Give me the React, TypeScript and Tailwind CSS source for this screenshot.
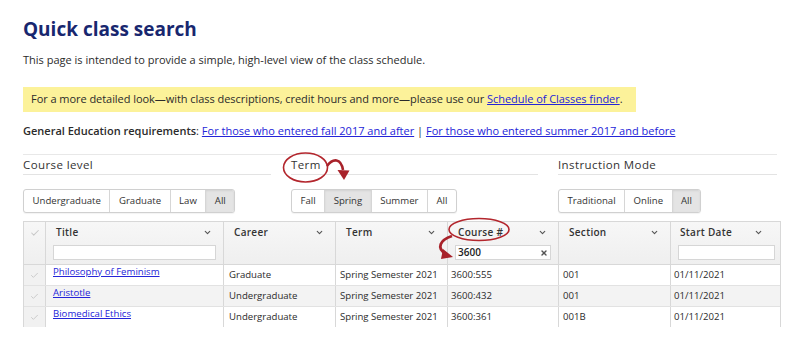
import { ChevronDown, Check, X } from "lucide-react";

const levels = ["Undergraduate", "Graduate", "Law", "All"];
const terms = ["Fall", "Spring", "Summer", "All"];
const modes = ["Traditional", "Online", "All"];

const rows = [
  { title: "Philosophy of Feminism", career: "Graduate", term: "Spring Semester 2021", course: "3600:555", section: "001", start: "01/11/2021" },
  { title: "Aristotle", career: "Undergraduate", term: "Spring Semester 2021", course: "3600:432", section: "001", start: "01/11/2021" },
  { title: "Biomedical Ethics", career: "Undergraduate", term: "Spring Semester 2021", course: "3600:361", section: "001B", start: "01/11/2021" },
];

const cols = "grid grid-cols-[21px_178px_112px_112px_111px_112px_112px]";

function ButtonGroup({ items, active }: { items: string[]; active: string }) {
  return (
    <div className="flex w-fit overflow-hidden rounded-[3px] border border-[#d0d0d0] bg-white shadow-[0_1px_1px_rgba(0,0,0,0.05)]">
      {items.map((it, i) => (
        <div
          key={i}
          className={
            "flex h-[22px] items-center px-[8.5px] text-[9.6px] text-[#333] " +
            (i > 0 ? "border-l border-[#d6d6d6] " : "") +
            (it === active ? "bg-[#e4e4e4] shadow-[inset_0_1px_2px_rgba(0,0,0,0.08)]" : "")
          }
        >
          {it}
        </div>
      ))}
    </div>
  );
}

function Head({ label, filter, value }: { label: string; filter?: boolean; value?: string }) {
  return (
    <div className="relative border-l border-[#d8d8d8] px-[7px] pt-[3px]">
      <div className="flex items-center justify-between pl-[3px] pr-[4px]">
        <span className="text-[10px] font-semibold tracking-[0.3px] text-[#333]">{label}</span>
        <ChevronDown className="h-[9px] w-[9px] text-[#555]" strokeWidth={3} />
      </div>
      {filter && (
        <div className="mt-[5px] flex h-[15px] items-center justify-between border border-[#d6d6d6] bg-white px-[2px]">
          <span className="text-[10px] font-semibold text-[#222]">{value}</span>
          {value && <X className="h-[8px] w-[8px] text-[#555]" strokeWidth={4} />}
        </div>
      )}
    </div>
  );
}

export default function App() {
  return (
    <div className="relative h-[342px] w-[800px] overflow-hidden bg-white px-[23px] pt-[14px] font-['Open_Sans',sans-serif] text-[#2b2b2b]">
      <h1 className="text-[19px] font-bold leading-[30px] text-[#18276f]">Quick class search</h1>
      <p className="mt-[7px] text-[11px] leading-[18px]">
        This page is intended to provide a simple, high-level view of the class schedule.
      </p>
      <div className="mt-[18px] flex h-[25px] w-[613px] items-center bg-[#fcf29a] px-[8px] text-[11px] tracking-[-0.05px] whitespace-nowrap">
        <span>
          For a more detailed look—with class descriptions, credit hours and more—please use our{" "}
          <a className="text-[#2424d8] underline">Schedule of Classes finder</a>.
        </span>
      </div>
      <p className="mt-[10px] text-[11px] leading-[18px]">
        <b className="font-semibold">General Education requirements</b>:{" "}
        <a className="text-[#2424d8] underline">For those who entered fall 2017 and after</a> |{" "}
        <a className="text-[#2424d8] underline">For those who entered summer 2017 and before</a>
      </p>

      <div className="mt-[14px] border-t border-[#e8e8e8]" />
      <div className="grid grid-cols-[248px_247px_1fr] gap-x-5">
        {[
          { h: "Course level", items: levels, active: "All" },
          { h: "Term", items: terms, active: "Spring" },
          { h: "Instruction Mode", items: modes, active: "All" },
        ].map((g) => (
          <div key={g.h}>
            <div className="flex h-[20px] items-end border-b border-[#e3e3e3] pb-[1px] text-[11.5px] font-medium tracking-[0.4px] text-[#333]">
              {g.h}
            </div>
            <div className="mt-[14px]">
              <ButtonGroup items={g.items} active={g.active} />
            </div>
          </div>
        ))}
      </div>

      <div className="mt-[8px] h-[106px] w-[758px] overflow-hidden border-r border-l border-t border-[#d8d8d8]">
        <div className={cols + " h-[43px] border-b border-[#d8d8d8] bg-gradient-to-b from-[#f7f7f7] to-[#efefef]"}>
          <div className="flex justify-center pt-[6px]">
            <Check className="h-[10px] w-[10px] text-[#c8c8c8]" strokeWidth={2.5} />
          </div>
          <Head label="Title" filter value="" />
          <Head label="Career" />
          <Head label="Term" />
          <Head label="Course #" filter value="3600" />
          <Head label="Section" />
          <div className="relative border-l border-[#d8d8d8] px-[7px] pt-[3px]">
            <div className="flex items-center pl-[2px]">
              <span className="text-[10px] font-semibold tracking-[0.3px] text-[#333]">Start Date</span>
              <ChevronDown className="ml-[22px] h-[9px] w-[9px] text-[#555]" strokeWidth={3} />
            </div>
            <div className="mt-[5px] h-[15px] border border-[#d6d6d6] bg-white" />
          </div>
        </div>
        {rows.map((r, i) => (
          <div key={i} className={cols + " h-[21px] border-b border-[#e2e2e2] text-[9.6px] " + (i % 2 === 1 ? "bg-[#f3f3f3]" : "bg-white")}>
            <div className="flex items-center justify-center bg-[#f1f1f1]">
              <Check className="h-[9px] w-[9px] text-[#c8c8c8]" strokeWidth={2.5} />
            </div>
            <div className="border-l border-[#d8d8d8] pl-[7px] leading-[13px]">
              <a className="text-[#2424d8] underline">{r.title}</a>
            </div>
            <div className="flex items-center border-l border-[#d8d8d8] pl-[5px] pt-[1px]">{r.career}</div>
            <div className="flex items-center border-l border-[#d8d8d8] pl-[4px] pt-[1px]">{r.term}</div>
            <div className="flex items-center border-l border-[#d8d8d8] pl-[3px] pt-[1px]">{r.course}</div>
            <div className="flex items-center border-l border-[#d8d8d8] pl-[4px] pt-[1px]">{r.section}</div>
            <div className="flex items-center border-l border-[#d8d8d8] pl-[3px] pt-[1px]">{r.start}</div>
          </div>
        ))}
      </div>

      <svg className="pointer-events-none absolute top-0 left-0" width="800" height="342" viewBox="0 0 800 342">
        <ellipse cx="305.5" cy="167.5" rx="22" ry="14.5" fill="none" stroke="#b3262d" strokeWidth="1.6" />
        <path d="M327 166 C333 158 341 158 343 170" fill="none" stroke="#a8222a" strokeWidth="2.6" />
        <path d="M337.5 170 L349.5 170.5 L344 180 Z" fill="#a8222a" />
        <ellipse cx="479" cy="229.5" rx="30" ry="11" fill="none" stroke="#b3262d" strokeWidth="1.6" />
        <path d="M452 236 C440 240 436 248 446 254" fill="none" stroke="#a8222a" strokeWidth="2.8" />
        <path d="M443 249 L453 257 L441 259 Z" fill="#a8222a" />
      </svg>
    </div>
  );
}
